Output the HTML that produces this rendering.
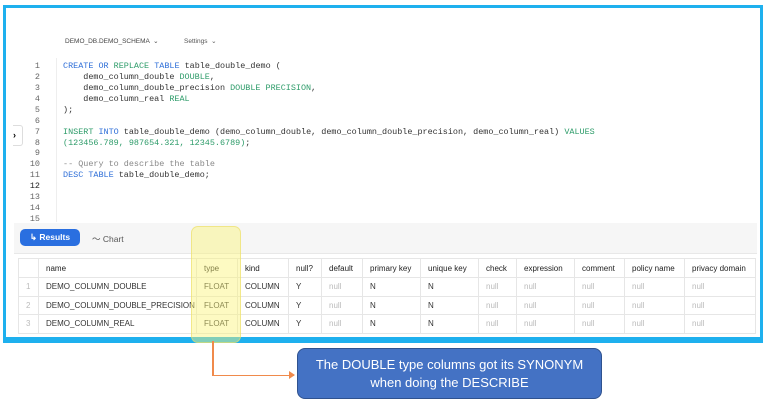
<!DOCTYPE html><html><head><style>
body{margin:0;width:768px;height:403px;background:#fff;position:relative;overflow:hidden;font-family:"Liberation Sans",sans-serif}
.frame{position:absolute;left:3px;top:5px;width:754px;height:332px;border:3px solid #1eb0ee;background:#fff}
.a{position:absolute}
.code{font-family:"Liberation Mono",monospace;font-size:8.45px;color:#333;white-space:pre}
.ln{position:absolute;left:18px;width:22px;text-align:right;font-family:"Liberation Mono",monospace;font-size:8.45px;color:#666}
.k{color:#2f6fd8}.t{color:#2e9c6a}.c{color:#888}
table{border-collapse:collapse;table-layout:fixed;width:737px;font-size:8px;color:#333;position:absolute;left:18px;top:258px}
td{border:1px solid #e6e6e6;height:17.5px;padding:0 0 0 7px;white-space:nowrap;overflow:hidden}
th{border:1px solid #e6e6e6;height:18px;text-align:left;font-weight:normal;padding:0 0 0 7px;color:#222;white-space:nowrap;overflow:hidden}
.n{color:#bbb}
</style></head><body>
<div class="frame"></div>
<div class="a" style="left:65px;top:37px;font-size:6.5px;color:#444">DEMO_DB.DEMO_SCHEMA &nbsp;⌄</div>
<div class="a" style="left:184px;top:37px;font-size:6.5px;color:#555">Settings &nbsp;⌄</div>
<div class="a" style="left:56px;top:58px;width:1px;height:164px;background:#eee"></div>
<div class="a" style="left:13px;top:125px;width:9px;height:19px;border:1px solid #ddd;border-left:none;border-radius:0 3px 3px 0;font-size:9px;font-weight:bold;line-height:19px">›</div>
<div id="lns"></div>
<div class="a code" style="left:63px;top:61px;line-height:10.93px"><span class="k">CREATE OR</span> <span class="t">REPLACE</span> <span class="k">TABLE</span> table_double_demo (
    demo_column_double <span class="t">DOUBLE</span>,
    demo_column_double_precision <span class="t">DOUBLE PRECISION</span>,
    demo_column_real <span class="t">REAL</span>
);

<span class="t">INSERT</span> <span class="k">INTO</span> table_double_demo (demo_column_double, demo_column_double_precision, demo_column_real) <span class="t">VALUES</span>
<span class="t">(123456.789, 987654.321, 12345.6789)</span>;

<span class="c">-- Query to describe the table</span>
<span class="k">DESC TABLE</span> table_double_demo;</div>
<div class="a" style="left:14px;top:223px;width:743px;height:30px;background:#f6f6f6;border-bottom:1px solid #e8e8e8"></div>
<div class="a" style="left:20px;top:229px;width:60px;height:17px;background:#2a6fe0;border-radius:5px;color:#fff;font-size:8.5px;font-weight:bold;line-height:17px;text-align:center">↳ Results</div>
<div class="a" style="left:92px;top:233px;font-size:8.5px;color:#555">〜 Chart</div>
<table>
<colgroup><col style="width:20px"><col style="width:158px"><col style="width:41px"><col style="width:51px"><col style="width:33px"><col style="width:41px"><col style="width:58px"><col style="width:58px"><col style="width:38px"><col style="width:58px"><col style="width:50px"><col style="width:60px"><col style="width:71px"></colgroup>
<tr><th></th><th>name</th><th>type</th><th>kind</th><th>null?</th><th>default</th><th>primary key</th><th>unique key</th><th>check</th><th>expression</th><th>comment</th><th>policy name</th><th>privacy domain</th></tr>
<tr><td class="n">1</td><td>DEMO_COLUMN_DOUBLE</td><td>FLOAT</td><td>COLUMN</td><td>Y</td><td class="n">null</td><td>N</td><td>N</td><td class="n">null</td><td class="n">null</td><td class="n">null</td><td class="n">null</td><td class="n">null</td></tr>
<tr><td class="n">2</td><td>DEMO_COLUMN_DOUBLE_PRECISION</td><td>FLOAT</td><td>COLUMN</td><td>Y</td><td class="n">null</td><td>N</td><td>N</td><td class="n">null</td><td class="n">null</td><td class="n">null</td><td class="n">null</td><td class="n">null</td></tr>
<tr><td class="n">3</td><td>DEMO_COLUMN_REAL</td><td>FLOAT</td><td>COLUMN</td><td>Y</td><td class="n">null</td><td>N</td><td>N</td><td class="n">null</td><td class="n">null</td><td class="n">null</td><td class="n">null</td><td class="n">null</td></tr>
</table>
<div class="a" style="left:6px;top:337px;width:754px;height:3px;background:#1eb0ee"></div>
<div class="a" style="left:191px;top:226px;width:48px;height:115px;background:rgba(250,245,120,0.45);border:1px solid rgba(235,220,100,0.6);border-radius:7px"></div>
<div class="a" style="left:212px;top:341px;width:1.5px;height:35px;background:#f08a4b"></div>
<div class="a" style="left:212px;top:374.5px;width:82px;height:1.5px;background:#f08a4b"></div>
<div class="a" style="left:289px;top:371px;border-left:6px solid #f08a4b;border-top:4px solid transparent;border-bottom:4px solid transparent"></div>
<div class="a" style="left:297px;top:348px;width:305px;height:51px;background:#4472c4;border:1px solid #2f528f;border-radius:8px;color:#fff;font-size:13px;text-align:center;line-height:18px;padding-top:7px;box-sizing:border-box">The DOUBLE type columns got its SYNONYM<br>when doing the DESCRIBE</div>
<script>
var h='';for(var i=1;i<=15;i++){h+='<div class="ln" style="top:'+(61+(i-1)*10.93)+'px;'+(i==12?'color:#222':'')+'">'+i+'</div>';}
document.getElementById('lns').innerHTML=h;
</script>
</body></html>
